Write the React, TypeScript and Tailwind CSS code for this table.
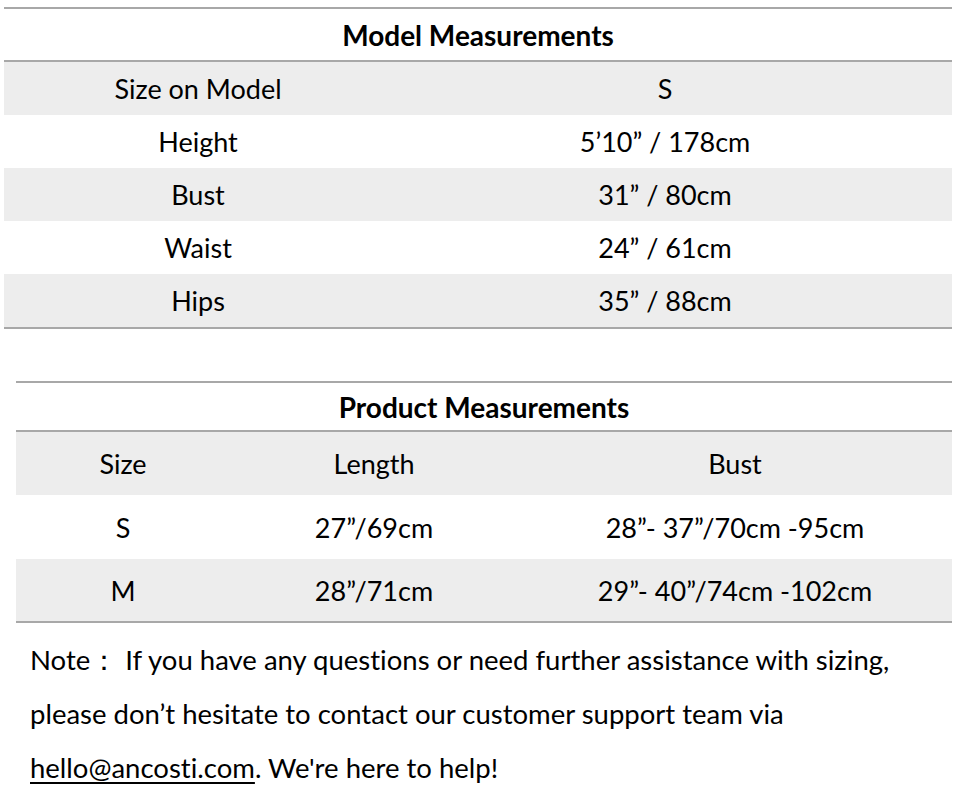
import React from "react";

const font = { fontFamily: "Lato, 'Noto Sans', sans-serif" };

function Row1({ a, b, gray }: { a: string; b: string; gray?: boolean }) {
  return (
    <div className={`flex h-[53px] items-center ${gray ? "bg-[#ededed]" : "bg-white"}`}>
      <div className="w-[388px] text-center">{a}</div>
      <div className="w-[546px] text-center">{b}</div>
    </div>
  );
}

function Row2({ a, b, c, gray, h }: { a: string; b: string; c: string; gray?: boolean; h: string }) {
  return (
    <div className={`flex items-center ${h} ${gray ? "bg-[#ededed]" : "bg-white"}`}>
      <div className="w-[214px] text-center">{a}</div>
      <div className="w-[288px] text-center">{b}</div>
      <div className="w-[434px] text-center">{c}</div>
    </div>
  );
}

export default function App() {
  return (
    <div
      className="w-[964px] h-[800px] bg-white text-black text-[27px] leading-none overflow-hidden [font-variant-ligatures:none]"
      style={font}
    >
      <div className="pt-[7px] pl-[4px] w-[952px]">
        <div className="border-t-2 border-b-2 border-[#a8a8a8]">
          <div className="h-[51px] flex items-center justify-center font-bold text-[28px]">Model Measurements</div>
        </div>
        <Row1 a="Size on Model" b="S" gray />
        <Row1 a="Height" b="5’10” / 178cm" />
        <Row1 a="Bust" b="31” / 80cm" gray />
        <Row1 a="Waist" b="24” / 61cm" />
        <Row1 a="Hips" b="35” / 88cm" gray />
        <div className="h-[2px] bg-[#a8a8a8]" />
      </div>
      <div className="pt-[52px] pl-[16px] w-[952px]">
        <div className="border-t-2 border-b-2 border-[#a8a8a8]">
          <div className="h-[47px] flex items-center justify-center font-bold text-[28px]">Product Measurements</div>
        </div>
        <Row2 a="Size" b="Length" c="Bust" gray h="h-[63px]" />
        <Row2 a="S" b="27”/69cm" c="28”- 37”/70cm -95cm" h="h-[64px]" />
        <Row2 a="M" b="28”/71cm" c="29”- 40”/74cm -102cm" gray h="h-[62px]" />
        <div className="h-[2px] bg-[#a8a8a8]" />
      </div>
      <div className="pl-[30px] pt-[10px] leading-[54px] text-[27.5px]">
        <p>Note：&nbsp;If you have any questions or need further assistance with sizing,</p>
        <p>please don’t hesitate to contact our customer support team via</p>
        <p>
          <span className="underline decoration-2 underline-offset-4">hello@ancosti.com</span>. We're here to help!
        </p>
      </div>
    </div>
  );
}
